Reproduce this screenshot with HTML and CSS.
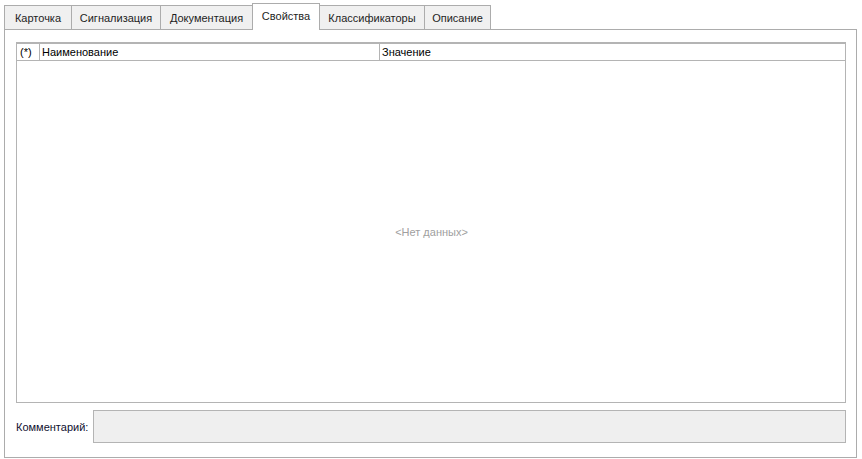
FILE: index.html
```html
<!DOCTYPE html>
<html lang="ru">
<head>
<meta charset="utf-8">
<title>Свойства</title>
<link rel="stylesheet" href="styles.css">
</head>
<body>
<div class="window">
  <div class="tabs">
    <div class="tab t-card">Карточка</div>
    <div class="tab t-signal">Сигнализация</div>
    <div class="tab t-docs">Документация</div>
    <div class="tab tab-active t-props">Свойства</div>
    <div class="tab t-class">Классификаторы</div>
    <div class="tab t-desc">Описание</div>
  </div>
  <div class="page">
    <div class="grid">
      <div class="grid-head">
        <div class="col col-mark">(*)</div>
        <div class="col col-name">Наименование</div>
        <div class="col col-value">Значение</div>
      </div>
      <div class="grid-body">
        <span class="empty">&lt;Нет данных&gt;</span>
      </div>
    </div>
    <div class="comment-row">
      <span class="comment-label">Комментарий:</span>
      <div class="comment-box"></div>
    </div>
  </div>
</div>
</body>
</html>
```

FILE: styles.css
```css
* { box-sizing: border-box; }

html, body {
  margin: 0;
  padding: 0;
  background: #ffffff;
}

body {
  font-family: "Liberation Sans", "DejaVu Sans", Arial, sans-serif;
  font-size: 11px;
  color: #1e1e1e;
}

.window {
  padding: 3px 0 0 4px;
  width: 857px;
}

/* tab strip */
.tabs {
  display: flex;
  align-items: flex-end;
  height: 26px;
}

.tab {
  height: 24px;
  border: 1px solid #acacac;
  border-bottom: none;
  background: #f0f0f0;
  margin-right: -1px;
  display: flex;
  align-items: center;
  justify-content: center;
  white-space: nowrap;
}

.t-card   { width: 68px; }
.t-signal { width: 90px; }
.t-docs   { width: 93px; }
.t-props  { width: 68px; }
.t-class  { width: 106px; }
.t-desc   { width: 67px; }

.tab-active {
  height: 27px;
  background: #ffffff;
  position: relative;
  z-index: 1;
  margin-bottom: -1px;
  padding-bottom: 3px;
}

/* page body */
.page {
  width: 853px;
  height: 429px;
  border: 1px solid #acacac;
  background: #ffffff;
  padding: 12px 10px 0 11px;
  display: flex;
  flex-direction: column;
}

.grid {
  height: 361px;
  border: 1px solid #b4b4b4;
  display: flex;
  flex-direction: column;
}

.grid-head {
  display: flex;
  height: 18px;
  border-top: 1px solid #b4b4b4;
  border-bottom: 1px solid #b4b4b4;
  color: #000000;
}

.col {
  display: flex;
  align-items: center;
  padding-left: 2px;
  border-right: 1px solid #b4b4b4;
}

.col-mark  { width: 23px; padding-left: 3px; }
.col-name  { width: 340px; }
.col-value { flex: 1; border-right: none; }

.grid-body {
  flex: 1;
  display: flex;
  align-items: center;
  justify-content: center;
  padding-left: 1px;
}

.empty {
  color: #a0a0a0;
}

.comment-row {
  display: flex;
  align-items: center;
  margin-top: 7px;
  height: 33px;
}

.comment-label {
  width: 77px;
  color: #101030;
}

.comment-box {
  flex: 1;
  height: 33px;
  border: 1px solid #b4b4b4;
  background: #efefef;
}
```
